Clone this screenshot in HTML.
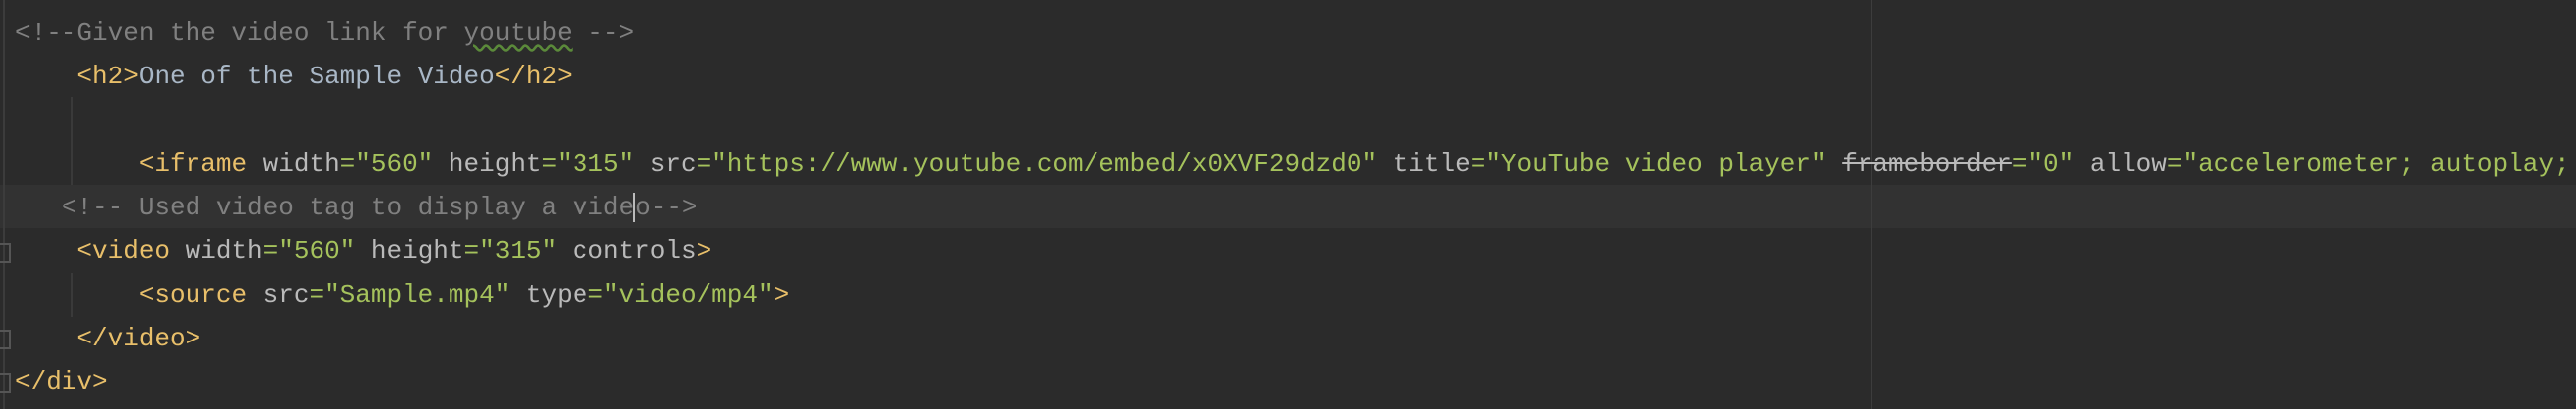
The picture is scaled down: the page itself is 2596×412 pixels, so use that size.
<!DOCTYPE html>
<html><head><meta charset="utf-8"><style>
html,body{margin:0;padding:0;width:2596px;height:412px;overflow:hidden;background:#2b2b2b;}
.l{position:absolute;left:15px;height:44px;line-height:44px;font-family:"Liberation Mono","DejaVu Sans Mono",monospace;font-size:26px;white-space:pre;color:#a9b7c6;}
.c{color:#808080}.t{color:#e8bf6a}.a{color:#bababa}.s{color:#a5c25c}.x{color:#a9b7c6}
.hl{position:absolute;left:0;top:186px;width:2596px;height:44px;background:#323232;}
.g{position:absolute;width:2px;background:#3a3a3a;}
.fold{position:absolute;left:0;width:11px;height:20px;border:2px solid #555;border-left:none;box-sizing:border-box;}
</style></head><body>
<div class="hl"></div>
<div style="position:absolute;left:3px;top:0;width:2px;height:412px;background:#3c3c3c"></div>
<div style="position:absolute;left:1886px;top:0;width:1px;height:412px;background:#3d3d3d"></div>
<div class="g" style="left:72px;top:98px;height:88px"></div>
<div class="g" style="left:72px;top:275px;height:44px"></div>
<div class="fold" style="top:245px"></div>
<div class="fold" style="top:332px"></div>
<div class="fold" style="top:376px"></div>
<div class="l" style="top:11px"><span class="c">&lt;!--Given the video link for <span style="text-decoration:underline wavy #5b8a3a;text-underline-offset:4px">youtube</span> --&gt;</span></div>
<div class="l" style="top:55px">    <span class="t">&lt;h2&gt;</span><span class="x">One of the Sample Video</span><span class="t">&lt;/h2&gt;</span></div>
<div class="l" style="top:143px">        <span class="t">&lt;iframe </span><span class="a">width</span><span class="s">="560"</span> <span class="a">height</span><span class="s">="315"</span> <span class="a">src</span><span class="s">="https://www.youtube.com/embed/x0XVF29dzd0"</span> <span class="a">title</span><span class="s">="YouTube video player"</span> <span class="a" style="text-decoration:line-through">frameborder</span><span class="s">="0"</span> <span class="a">allow</span><span class="s">="accelerometer; autoplay;</span></div>
<div class="l" style="top:187px">   <span class="c">&lt;!-- Used video tag to display a vide<span style="border-left:2px solid #bbb;margin-left:-1px">o</span>--&gt;</span></div>
<div class="l" style="top:231px">    <span class="t">&lt;video </span><span class="a">width</span><span class="s">="560"</span> <span class="a">height</span><span class="s">="315"</span> <span class="a">controls</span><span class="t">&gt;</span></div>
<div class="l" style="top:275px">        <span class="t">&lt;source </span><span class="a">src</span><span class="s">="Sample.mp4"</span> <span class="a">type</span><span class="s">="video/mp4"</span><span class="t">&gt;</span></div>
<div class="l" style="top:319px">    <span class="t">&lt;/video&gt;</span></div>
<div class="l" style="top:363px"><span class="t">&lt;/div&gt;</span></div>
</body></html>
